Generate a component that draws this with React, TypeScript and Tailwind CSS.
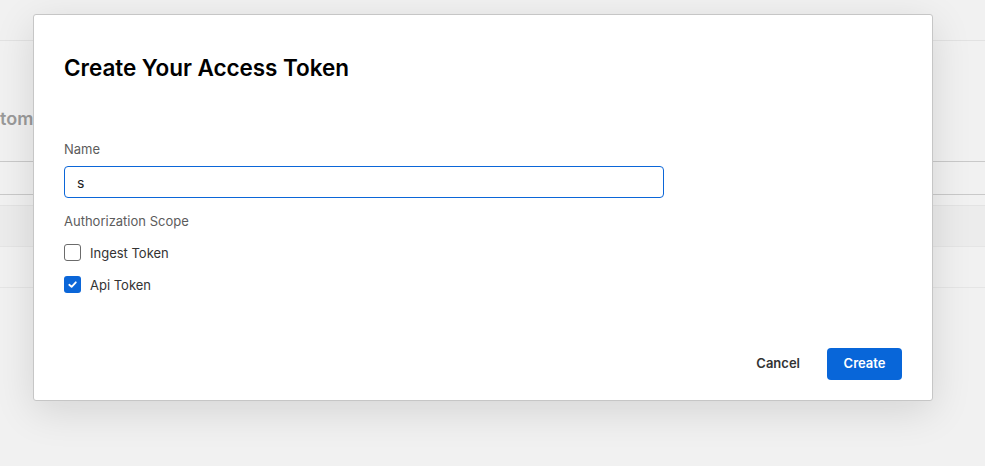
import React, { useState } from 'react';

const Checkbox: React.FC<{ checked: boolean; label: string; onChange: () => void }> = ({
  checked,
  label,
  onChange,
}) => (
  <label className="flex items-center gap-[9px] cursor-pointer h-[17px]" onClick={onChange}>
    {checked ? (
      <span className="flex items-center justify-center w-[17px] h-[17px] rounded-[3px] bg-[#0b66d8]">
        <svg width="11" height="11" viewBox="0 0 12 12" fill="none">
          <path d="M2.5 6.3 L5 8.6 L9.6 3.6" stroke="white" strokeWidth="2" strokeLinecap="round" strokeLinejoin="round" />
        </svg>
      </span>
    ) : (
      <span className="w-[17px] h-[17px] rounded-[3px] border-[1.5px] border-[#6b6b6b] bg-white" />
    )}
    <span className="text-[13px] text-[#333] leading-4">{label}</span>
  </label>
);

export default function App() {
  const [name, setName] = useState('s');
  const [ingest, setIngest] = useState(false);
  const [api, setApi] = useState(true);

  return (
    <div
      className="relative w-[985px] h-[466px] overflow-hidden bg-[#f1f1f1]"
      style={{ fontFamily: 'Inter, "Noto Sans", sans-serif' }}
    >
      {/* page behind the overlay */}
      <div className="flex flex-col">
        <div className="h-[41px] border-b border-[#e2e2e2]" />
        <div className="h-[121px] border-b border-[#c9c9c9] flex items-end pb-[30px]">
          <span className="text-[18px] font-semibold text-[#9a9a9a] leading-6">tom</span>
        </div>
        <div className="h-[33px] border-b border-[#c9c9c9]" />
        <div className="h-[11px] border-b border-[#e3e3e3]" />
        <div className="h-[41px] border-b border-[#e5e5e5] bg-[#ececec]" />
        <div className="h-[41px] border-b border-[#e5e5e5]" />
      </div>

      {/* modal */}
      <div className="absolute left-[33px] top-[14px] w-[900px] h-[387px] bg-white border border-[#c6c6c6] rounded-[3px] shadow-[0_10px_40px_rgba(0,0,0,0.12)] flex flex-col pl-[30px] pr-[30px] pt-[39px] pb-[20px]">
        <h2 className="text-[22.5px] leading-7 font-semibold text-black tracking-[-0.05px]">
          Create Your Access Token
        </h2>

        <div className="mt-[59px] text-[13px] leading-4 text-[#5c5c5c]">Name</div>
        <input
          value={name}
          onChange={(e) => setName(e.target.value)}
          className="mt-[9px] w-[600px] h-[32px] rounded-[4px] border border-[#0b66d8] px-[12px] text-[14px] text-[#222] outline-none"
        />

        <div className="mt-[15px] text-[13px] leading-4 text-[#5c5c5c]">Authorization Scope</div>
        <div className="mt-[15px] flex flex-col gap-[15px]">
          <Checkbox checked={ingest} label="Ingest Token" onChange={() => setIngest(!ingest)} />
          <Checkbox checked={api} label="Api Token" onChange={() => setApi(!api)} />
        </div>

        <div className="mt-auto flex items-center justify-end gap-[13px]">
          <button className="h-[32px] px-[14px] text-[13px] font-semibold text-[#333]">Cancel</button>
          <button className="h-[32px] w-[75px] rounded-[4px] bg-[#0866d9] text-[13px] font-semibold text-white">
            Create
          </button>
        </div>
      </div>
    </div>
  );
}
